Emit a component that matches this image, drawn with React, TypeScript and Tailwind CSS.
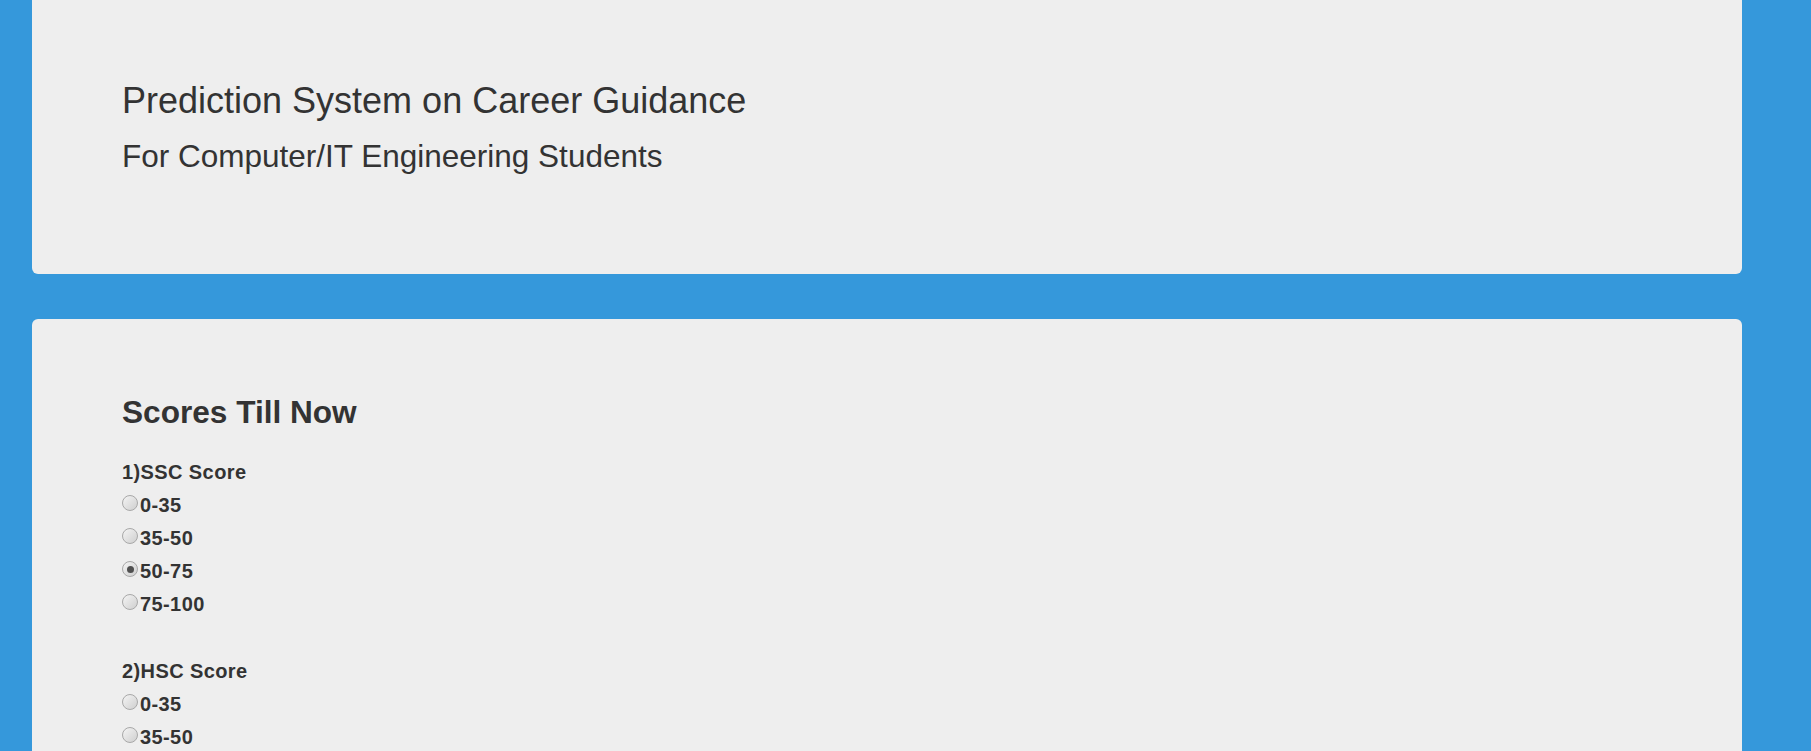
const ssc = ['0-35', '35-50', '50-75', '75-100'];
const hsc = ['0-35', '35-50', '50-75', '75-100'];

// radio styled like the old windows control in the screenshot
function Radio({ checked }: { checked?: boolean }) {
  return (
    <span className="inline-flex h-[16px] w-[16px] shrink-0 items-center justify-center self-start mt-[6px] mr-[2px] rounded-full border border-[#a8a8a8] bg-gradient-to-br from-[#f4f4f4] to-[#cfcfcf]">
      {checked && <span className="h-[7px] w-[7px] rounded-full bg-[#4f4f4f]" />}
    </span>
  );
}

function Question({ title, options, selected }: { title: string; options: string[]; selected?: string }) {
  return (
    <div className="flex flex-col text-[20px] font-bold tracking-[0.4px]">
      <div className="h-[33px] leading-[33px]">{title}</div>
      {options.map((o) => (
        <label key={o} className="flex h-[33px] items-start leading-[33px]">
          <Radio checked={o === selected} />
          <span>{o}</span>
        </label>
      ))}
    </div>
  );
}

export default function App() {
  return (
    <div
      className="min-h-screen bg-[#3598db] pl-[32px] pr-[69px] pb-[40px] text-[#333]"
      style={{ fontFamily: '"Liberation Sans", Arial, sans-serif' }}
    >
      <div className="h-[274px] rounded-b-md bg-[#eeeeee] pl-[90px] pt-[81px]">
        <h1 className="text-[36px] leading-[40px]">Prediction System on Career Guidance</h1>
        <h2 className="mt-[18px] text-[31.5px] leading-[34px]">For Computer/IT Engineering Students</h2>
      </div>

      <div className="mt-[45px] rounded-md bg-[#eeeeee] pl-[90px] pt-[76px] pb-[60px]">
        <h2 className="text-[31.6px] font-bold leading-[34px]">Scores Till Now</h2>
        <div className="mt-[27px] flex flex-col gap-[34px]">
          <Question title="1)SSC Score" options={ssc} selected="50-75" />
          <Question title="2)HSC Score" options={hsc} />
        </div>
      </div>
    </div>
  );
}
